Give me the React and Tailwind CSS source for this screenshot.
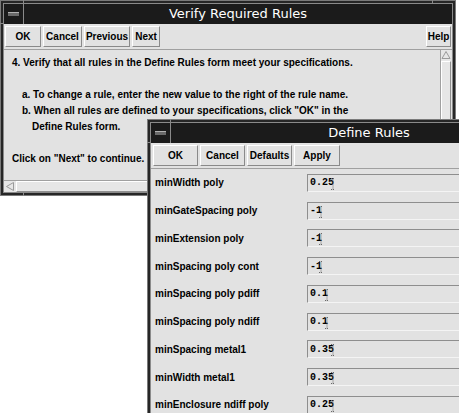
const ui = { fontFamily: '"Liberation Sans", Arial, sans-serif' };
const title = { fontFamily: '"DejaVu Sans", "Liberation Sans", sans-serif' };
const mono = { fontFamily: '"Liberation Mono", "DejaVu Sans Mono", monospace' };

const Btn = ({ children, w }) => (
    <div className={`${w} h-[21px] flex items-center justify-center border border-t-white border-l-white border-b-[#8a8a8a] border-r-[#8a8a8a] bg-[#e2e2e2] text-[10px] font-bold text-black`}>
        {children}
    </div>
);

const MenuBox = () => (
    <div className="w-[20px] h-full border-r border-[#8a8a8a] flex items-center justify-center">
        <div className="w-[11px] h-[4px] bg-[#6a6a6a] border-t border-[#b0b0b0]"></div>
    </div>
);

const Cursor = () => (
    <svg width="5" height="12" viewBox="0 0 5 12" className="-ml-[3px] mt-[2px]">
        <path d="M0 0.5h4M2 0.5v11M0 11.5h4" stroke="#6a6a6a" strokeWidth="1" strokeDasharray="1 1" fill="none" />
    </svg>
);

// corner marks on the window frame
const Ticks = () => (
    <>
        <div className="absolute left-[22px] -top-[1px] w-px h-[4px] bg-[#8a8a8a]"></div>
        <div className="absolute -left-[1px] top-[22px] w-[4px] h-px bg-[#8a8a8a]"></div>
        <div className="absolute right-[22px] -top-[1px] w-px h-[4px] bg-[#8a8a8a]"></div>
    </>
);

const rules = [
    ["minWidth poly", "0.25"],
    ["minGateSpacing poly", "-1"],
    ["minExtension poly", "-1"],
    ["minSpacing poly cont", "-1"],
    ["minSpacing poly pdiff", "0.1"],
    ["minSpacing poly ndiff", "0.1"],
    ["minSpacing metal1", "0.35"],
    ["minWidth metal1", "0.35"],
    ["minEnclosure ndiff poly", "0.25"],
];

const VerifyWindow = () => (
    <div className="absolute left-0 top-0 w-[456px] h-[196px] bg-[#262626] border border-[#7a7a7a] p-[2px]">
        <Ticks />
        <div className="absolute left-[22px] -bottom-[1px] w-px h-[4px] bg-[#8a8a8a]"></div>
        <div className="h-full flex flex-col border border-[#8a8a8a] bg-[#e2e2e2]">
            <div className="h-[20px] flex bg-[#1b1b1b]">
                <MenuBox />
                <div className="flex-1 flex items-center justify-center text-white text-[13px]" style={title}>
                    Verify Required Rules
                </div>
            </div>
            <div className="h-[26px] flex items-center pl-[1px] pr-[1px] gap-[2px] border-b border-[#a0a0a0]" style={ui}>
                <Btn w="w-[36px]">OK</Btn>
                <Btn w="w-[39px]">Cancel</Btn>
                <Btn w="w-[46px]">Previous</Btn>
                <Btn w="w-[28px]">Next</Btn>
                <div className="flex-1"></div>
                <Btn w="w-[25px]">Help</Btn>
            </div>
            <div className="flex-1 flex">
                <div className="flex-1 pl-[8px] pt-[5px] text-[10px] font-bold leading-[16px] text-black" style={ui}>
                    <div>4. Verify that all rules in the Define Rules form meet your specifications.</div>
                    <div className="h-[16px]"></div>
                    <div className="pl-[10px]">a. To change a rule, enter the new value to the right of the rule name.</div>
                    <div className="pl-[10px]">b. When all rules are defined to your specifications, click "OK" in the</div>
                    <div className="pl-[20px]">Define Rules form.</div>
                    <div className="h-[16px]"></div>
                    <div>Click on "Next" to continue.</div>
                </div>
                <div className="w-[11px] mr-[1px] flex flex-col border-l border-[#a0a0a0] bg-[#e6e6e6]">
                    <svg width="10" height="10" viewBox="0 0 10 10">
                        <path d="M1 8.5L5 1.5L9 8.5Z" fill="none" stroke="#9a9a9a" />
                    </svg>
                    <div className="mt-[1px] flex-1 border border-t-white border-l-white border-b-[#909090] border-r-[#909090]"></div>
                </div>
            </div>
            <div className="h-[12px] flex border-t border-[#a0a0a0] bg-[#e6e6e6]">
                <svg width="12" height="11" viewBox="0 0 12 11">
                    <path d="M9.5 1.5L2.5 5.5L9.5 9.5Z" fill="none" stroke="#9a9a9a" />
                </svg>
                <div className="flex-1 border border-t-white border-l-white border-b-[#909090] border-r-[#909090]"></div>
            </div>
        </div>
    </div>
);

const DefineWindow = () => (
    <div className="absolute left-[147px] top-[119px] w-[424px] h-[320px] bg-[#262626] border border-[#7a7a7a] p-[2px]">
        <Ticks />
        <div className="h-full flex flex-col border border-[#8a8a8a] bg-[#e2e2e2]">
            <div className="h-[20px] flex bg-[#1b1b1b]">
                <MenuBox />
                <div className="flex-1 flex items-center justify-center text-white text-[13px]" style={title}>
                    Define Rules
                </div>
            </div>
            <div className="h-[26px] flex items-center pl-[2px] gap-[2px] border-b border-[#a0a0a0]" style={ui}>
                <Btn w="w-[45px]">OK</Btn>
                <Btn w="w-[45px]">Cancel</Btn>
                <Btn w="w-[45px]">Defaults</Btn>
                <Btn w="w-[46px]">Apply</Btn>
            </div>
            <div className="flex flex-col">
                {rules.map(([name, val]) => (
                    <div key={name} className="h-[27.75px] flex items-center">
                        <div className="w-[156px] pl-[4px] text-[10px] font-bold text-black" style={ui}>{name}</div>
                        <div className="flex-1 h-[18px] flex items-center pl-[2px] border border-t-[#8e8e8e] border-l-[#8e8e8e] border-b-[#f4f4f4] border-r-[#f4f4f4]">
                            <span className="text-[10px] font-bold text-black" style={mono}>{val}</span>
                            <Cursor />
                        </div>
                    </div>
                ))}
            </div>
        </div>
    </div>
);

export default function App() {
    return (
        <div className="relative w-[459px] h-[413px] overflow-hidden bg-white">
            <VerifyWindow />
            <DefineWindow />
        </div>
    );
}
